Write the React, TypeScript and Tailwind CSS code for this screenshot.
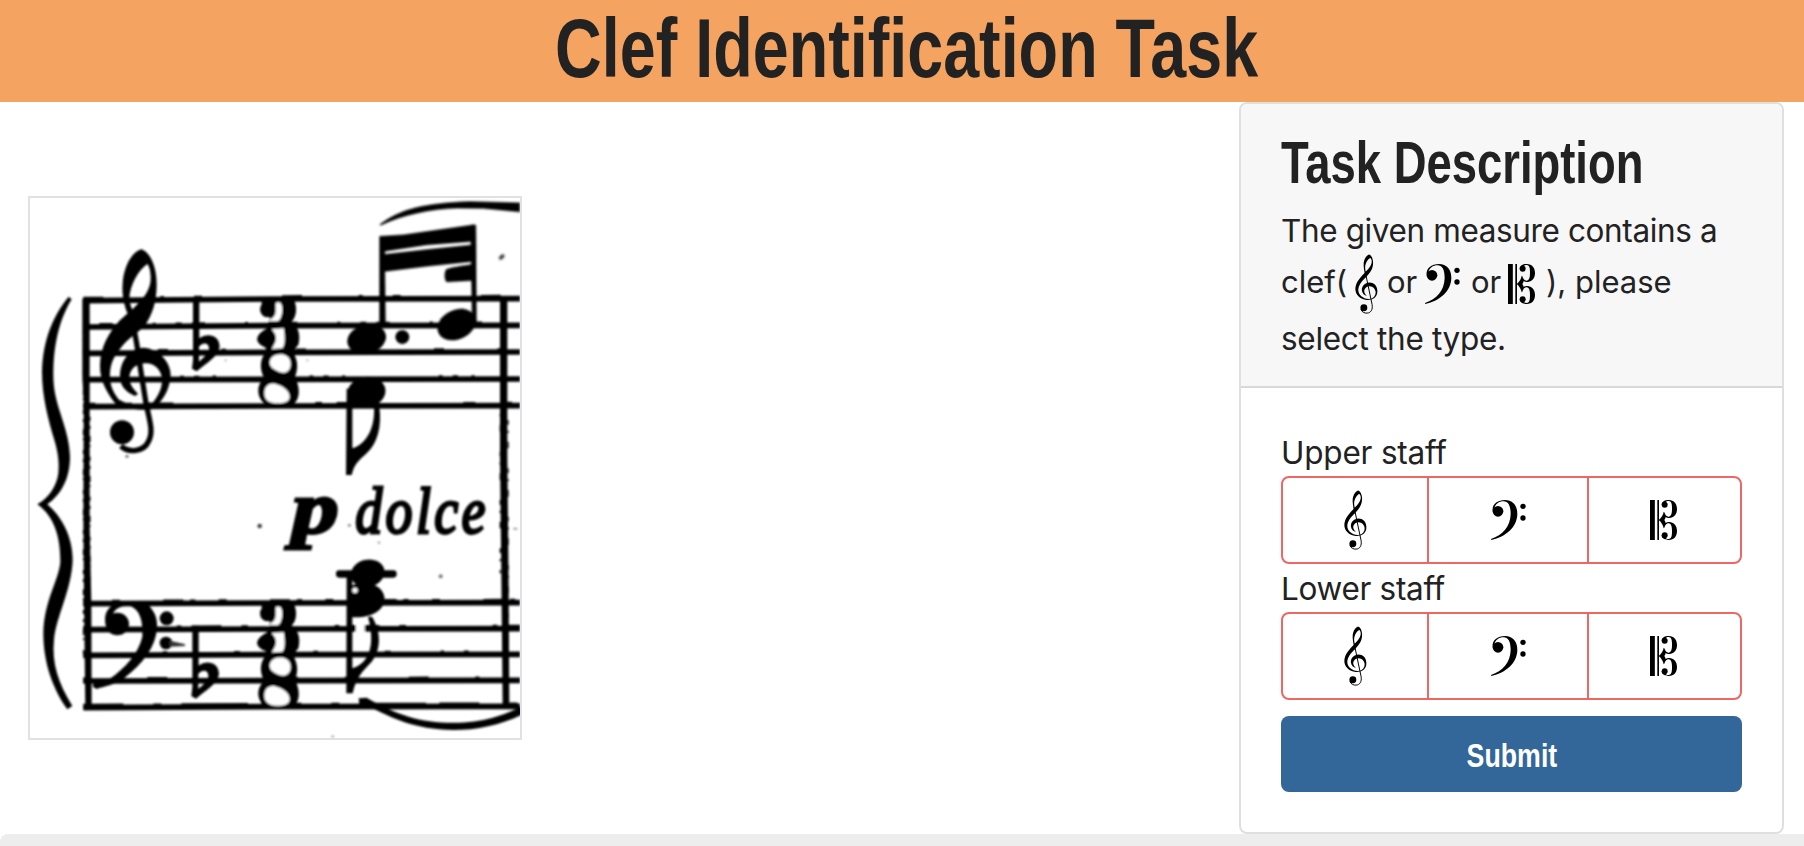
import React from "react";

type IconProps = { className?: string };

function TrebleClef({ className }: IconProps) {
  return (
    <svg viewBox="221 209 70 181" className={className} fill="#000">
      <path d="M264,210C271,212 277,224 276,238C275,255 266,267 255,278C242,290 232,302 231,317C231,334 246,344 262,345L268,344.5L268,347C264,348.500 260,348.500 257,348C236,346 222,332 222,314C223,294 236,281 248,268C259,257 271,246 272,232C272,224 269,220 267,220C259,224 251,238 252,252L254,266L251,269C247,250 246,236 249,228C252,219 258,211 264,210Z" />
      <path d="M268,347.500C282,344 290,334 289,319C288,304 278,295 265,295C251,296 241,306 242,319C243,328 250,334 257,336C251,330 249,325 249,320C250,311 257,306 266,306C276,307 283,314 284,324C284,335 278,342 268,345Z" />
      <path d="M252,262L273,362C276,378 268,388 258,388C250,389 242,385 239,377" fill="none" stroke="#000" strokeWidth="3" />
      <circle cx="248" cy="372" r="10.500" />
    </svg>
  );
}

function BassClef({ className }: IconProps) {
  return (
    <svg viewBox="660 240 105 120" className={className} fill="#000">
      <circle cx="681" cy="274" r="16" />
      <path d="M665,274C662,252 680,240 702,240C725,241 739,255 739,282C738,322 705,350 661,360L660,357C695,345 718,320 719,282C719,256 711,244 698,244C684,244 672,252 670,266Z" />
      <circle cx="756" cy="259" r="8" />
      <circle cx="756" cy="294" r="8" />
    </svg>
  );
}

function AltoClef({ className }: IconProps) {
  const lobe =
    "M1175,254C1176,244 1185,240 1196,240C1213,240 1221,252 1221,267C1221,283 1211,294 1198,294C1193,294 1190,293 1187,291C1186,296 1184,299 1182,301L1166,301C1174,293 1180,284 1181,275L1183,277C1186,286 1190,291 1197,290C1204,288 1206,280 1206,267C1206,250 1204,244 1196,243C1191,243 1187,245 1188,247Z";
  return (
    <svg viewBox="1140 240 81 120" className={className} fill="#000">
      <rect x="1140" y="240" width="14.500" height="120" />
      <rect x="1162" y="240" width="5" height="120" />
      <path d={lobe} />
      <circle cx="1184" cy="254" r="9" />
      <g transform="translate(0 600) scale(1 -1)">
        <path d={lobe} />
        <circle cx="1184" cy="254" r="9" />
      </g>
    </svg>
  );
}

function TimeSignature() {
  return (
    <g>
      <ellipse cx="67" cy="73" rx="22" ry="24" />
      <rect x="50" y="40" width="40" height="20" />
      <path d="M85,40L145,40C158,65 155,95 140,110C160,125 168,150 160,180C148,190 145,205 152,218C160,240 156,260 150,275C166,310 166,340 145,358L62,358C35,340 32,300 58,280C42,250 45,220 64,200L62,188C25,172 30,150 67,130Z" />
      <g fill="#fff">
        <path d="M92,54C108,46 113,60 111,82C109,98 104,108 96,109L70,109C66,103 92,104 92,78Z" />
        <path d="M80,133L116,130C121,160 120,180 112,190L80,192C86,182 93,172 93,160C93,150 88,142 80,133Z" />
        <path d="M74,232C76,214 92,206 112,208C132,212 140,228 136,246C130,262 118,266 106,262C90,256 74,248 74,232Z" />
        <path d="M58,325C58,304 72,292 90,296C114,302 134,318 134,336C132,350 120,355 96,355C74,356 58,345 58,325Z" />
      </g>
    </g>
  );
}

function StaffLine({ y1, y2, dash }: { y1: number; y2: number; dash: string }) {
  return (
    <g fill="none" stroke="#000">
      <path d={`M190,${y1}L750,${y2 + 1}L1500,${y2}`} strokeWidth="17" />
      <path d={`M190,${y1 - 3}L750,${y2 - 2}L1500,${y2 - 3}`} strokeWidth="17" strokeDasharray={dash} />
    </g>
  );
}

function Flat() {
  return (
    <path
      fillRule="evenodd"
      d="M519,325L538,325L538,445C560,428 598,433 599,470C595,500 560,518 530,544L516,536L519,510ZM537,470C550,454 568,458 567,478C562,495 550,503 537,515Z"
    />
  );
}

function Score() {
  return (
    <svg viewBox="30 24 1470 1620" className="block h-[540px] w-[490px]">
      <defs>
        <filter id="ink" x="-2%" y="-2%" width="104%" height="104%">
          <feGaussianBlur stdDeviation="3" />
        </filter>
      </defs>
      <g filter="url(#ink)" fill="#000">
        <StaffLine y1={332} y2={326} dash="60 170 12 90 24 240" />
        <StaffLine y1={411} y2={406} dash="18 30 40 120 9 60" />
        <StaffLine y1={490} y2={486} dash="14 210 30 160" />
        <StaffLine y1={569} y2={567} dash="10 280 12 30 16 40" />
        <StaffLine y1={650} y2={647} dash="36 90 20 44 80 300" />
        <StaffLine y1={1241} y2={1238} dash="16 70 24 130 60 20" />
        <StaffLine y1={1319} y2={1316} dash="20 260 14 30 90 60" />
        <StaffLine y1={1396} y2={1393} dash="18 150 10 60 14 200" />
        <StaffLine y1={1473} y2={1471} dash="12 180 60 140" />
        <StaffLine y1={1553} y2={1549} dash="120 90 24 60 200 40" />

        <path d="M187,326L209,326L209,1000L214,1240L215,1556L196,1556L192,1240L190,1000L191,640L187,560Z" />
        <path
          d="M191,420V1400M209,680V1200"
          fill="none"
          stroke="#000"
          strokeWidth="5"
          strokeDasharray="12 16 8 22 18 9 5 30"
        />
        <path d="M1440,326L1462,326L1462,800L1466,1200L1468,1550L1448,1550L1444,1150L1440,800Z" />
        <path
          d="M1441,640V1150M1464,690V1400"
          fill="none"
          stroke="#000"
          strokeWidth="4"
          strokeDasharray="14 18 7 26 20 60"
        />

        <path d="M146,320C100,375 68,450 66,545C66,620 85,690 103,750C115,790 118,820 115,850C110,890 85,925 52,943C90,970 122,1020 121,1115C117,1170 72,1230 70,1330C70,1420 100,1500 142,1558L157,1548C115,1480 95,1420 102,1350C108,1280 155,1200 158,1110C158,1040 125,980 82,943C120,915 150,870 150,800C148,720 110,660 102,590C95,500 110,400 155,328Z" />

        <path d="M365,178C395,190 412,240 410,290C408,340 398,370 374,408C350,430 325,445 305,470C280,500 268,525 270,565C272,600 290,625 315,648L290,645C260,610 240,570 240,530C240,490 252,450 285,408C305,382 325,370 345,350C365,330 395,300 392,260C391,240 388,230 382,222C355,240 330,285 328,325C330,345 335,355 340,365L325,375C312,350 305,310 308,280C312,230 335,185 365,178Z" />
        <path d="M300,560C300,510 330,475 370,473C415,475 452,515 452,555C450,600 425,640 395,658C370,662 320,658 285,638L300,630C330,648 370,650 392,645C415,620 430,590 425,560C420,535 400,518 375,520C345,522 328,540 328,565C330,590 345,600 354,612L345,618C315,605 300,585 300,560Z" />
        <path
          d="M338,395L350,460L362,540L378,640C388,690 402,725 385,755C372,785 325,790 303,768"
          fill="none"
          stroke="#000"
          strokeWidth="16"
        />
        <circle cx="306" cy="727" r="36" />
        <circle cx="321" cy="799" r="5" fill="#777" />
        <circle cx="617" cy="511" r="4" fill="#ccc" />

        <Flat />
        <g transform="translate(-2 983) scale(1 0.998)">
          <Flat />
        </g>
        <g transform="translate(675 285)">
          <TimeSignature />
        </g>
        <g transform="translate(675 1199) scale(1 0.98)">
          <TimeSignature />
        </g>

        <g transform="translate(0 810)">
          <ellipse cx="292" cy="492" rx="35" ry="34" />
          <path d="M257,495C250,460 262,438 300,425L380,430C405,455 413,475 411,505C407,560 370,610 312,655C285,675 250,680 230,687L218,680L222,664L268,657C315,625 355,580 367,530C369,480 360,450 330,437C296,436 278,450 275,475Z" />
          <circle cx="440" cy="475" r="21" />
          <circle cx="438" cy="549" r="19" />
          <path d="M450,542L495,553L495,558L450,560Z" fill="#333" />
          <circle cx="719" cy="198" r="7" fill="#444" />
        </g>

        <g transform="translate(750 0)">
          <path d="M328,104C390,55 470,38 600,34L750,38L750,66L640,56L560,55C480,58 400,75 333,106Z" />
          <path d="M328,138L400,134L615,103L617,154L470,165L345,184L345,192L470,178L617,163L617,214L480,228L345,245L347,400L328,400Z" />
          <path d="M528,238C540,230 580,228 605,222L612,272L530,276C522,270 522,248 528,238Z" />
          <path d="M601,105L618,105L620,400L606,400Z" />
          <ellipse cx="290" cy="447" rx="59" ry="43" transform="rotate(-14 290 447)" />
          <ellipse cx="560" cy="404" rx="60" ry="44" transform="rotate(-25 560 404)" />
          <circle cx="397" cy="441" r="21" />
          <ellipse cx="695" cy="201" rx="10" ry="6" fill="#444" transform="rotate(-45 695 201)" />
          <circle cx="112" cy="511" r="4" fill="#ccc" />
          <ellipse cx="289" cy="607" rx="58" ry="46" transform="rotate(-12 289 607)" />
          <path d="M230,595L247,605L247,775C290,762 316,712 312,650L328,650C336,710 322,760 290,790C265,812 252,825 245,855L228,855Z" />
        </g>

        <g transform="translate(750 810)">
          <text
            x="66"
            y="219"
            fontFamily="Liberation Serif, serif"
            fontStyle="italic"
            fontWeight="700"
            fontSize="222"
            stroke="#000"
            strokeWidth="9"
            textLength="140"
            lengthAdjust="spacingAndGlyphs"
          >
            p
          </text>
          <text
            x="256"
            y="218"
            fontFamily="Liberation Serif, serif"
            fontStyle="italic"
            fontSize="198"
            stroke="#000"
            strokeWidth="9"
            letterSpacing="12"
            textLength="400"
            lengthAdjust="spacingAndGlyphs"
          >
            dolce
          </text>
          <rect x="198" y="331" width="182" height="22" rx="10" />
          <ellipse cx="293" cy="340" rx="51" ry="41" transform="rotate(-14 293 340)" />
          <path d="M240,380C270,365 305,368 325,382C350,400 350,435 325,452C300,472 265,474 232,470Z" />
          <rect x="258" y="490" width="26" height="30" fill="#fff" />
          <path d="M230,345L247,345L247,625C295,610 318,560 294,470L306,470C336,520 332,570 305,605C280,632 258,650 248,700L229,700Z" />
          <circle cx="255" cy="391" r="8" fill="#fff" />
          <path d="M266,715L290,713C380,765 450,788 550,788C640,788 700,765 755,740L755,764C690,795 620,810 550,810C430,808 370,775 300,742L268,732Z" />
          <circle cx="512" cy="349" r="6" fill="#777" />
          <circle cx="238" cy="196" r="5" fill="#999" />
          <circle cx="327" cy="248" r="4" fill="#aaa" />
          <ellipse cx="736" cy="206" rx="7" ry="3" fill="#999" />
          <circle cx="188" cy="830" r="4" fill="#aaa" />
        </g>
      </g>
    </svg>
  );
}

function ClefChoice() {
  return (
    <div className="flex h-[88px] w-[461px] overflow-hidden rounded-lg border-2 border-[#eb6864]">
      <button type="button" className="flex w-[144px] items-center justify-center">
        <TrebleClef className="h-[60px] w-[23px]" />
      </button>
      <button type="button" className="flex w-[160px] items-center justify-center border-l-2 border-[#eb6864]">
        <BassClef className="h-10 w-[35px]" />
      </button>
      <button type="button" className="flex flex-1 items-center justify-center border-l-2 border-[#eb6864] pr-0.5">
        <AltoClef className="h-10 w-[27px]" />
      </button>
    </div>
  );
}

export default function App() {
  return (
    <div className="flex h-[846px] flex-col overflow-hidden bg-white font-['Inter',sans-serif] text-[#222]">
      <header className="flex h-[102px] shrink-0 justify-center bg-[#f4a460] pl-[9px]">
        <h1 className="h-[96px] origin-top scale-x-[0.77] whitespace-nowrap font-['Liberation_Sans',sans-serif] text-[84px] leading-[96px] font-bold">
          Clef Identification Task
        </h1>
      </header>

      <main className="flex h-[732px] shrink-0 items-start justify-between pr-5 pl-7">
        <div className="mt-[94px] border-2 border-[#dee2e6] bg-white">
          <Score />
        </div>

        <aside className="flex h-[732px] w-[545px] flex-col overflow-hidden rounded-lg border-2 border-[#dfdfdf]">
          <div className="h-[284px] border-b-2 border-[#d8d8d8] bg-[#f7f7f7] pt-[26px] pl-10">
            <h2 className="h-[66px] w-max origin-left scale-x-[0.776] whitespace-nowrap font-['Liberation_Sans',sans-serif] text-[58.5px] leading-[66px] font-bold">
              Task Description
            </h2>
            <p className="mt-[11px] h-12 text-[31.500px] leading-[48px] tracking-[-0.38px] whitespace-nowrap">
              The given measure contains a
            </p>
            <div className="-mt-px flex h-[60px] items-center text-[31px] leading-[44px] whitespace-nowrap">
              <span className="w-[74px] pb-1">clef(</span>
              <TrebleClef className="h-[60px] w-[23px]" />
              <span className="ml-[9px] w-[38px] pb-1">or</span>
              <BassClef className="h-10 w-[35px]" />
              <span className="ml-[11px] w-[37px] pb-1">or</span>
              <AltoClef className="h-10 w-[27px]" />
              <span className="ml-[11px] pb-1">), please</span>
            </div>
            <p className="mt-px h-12 text-[31.500px] leading-[48px] tracking-[-0.3px] whitespace-nowrap">select the type.</p>
          </div>

          <div className="flex flex-col pt-[40px] pl-10">
            <div className="h-12 pt-px text-[31.500px] leading-[48px] tracking-[-0.2px]">Upper staff</div>
            <ClefChoice />
            <div className="h-12 pt-px text-[31.500px] leading-[48px] tracking-[-0.3px]">Lower staff</div>
            <ClefChoice />
            <button
              type="button"
              className="mt-4 flex h-[76px] w-[461px] items-center justify-center rounded-lg bg-[#336699] pt-1 text-white"
            >
              <span className="scale-x-[0.81] font-['Liberation_Sans',sans-serif] text-[33px] font-bold">Submit</span>
            </button>
          </div>
        </aside>
      </main>

      <footer className="h-3 shrink-0 rounded-tl-lg bg-[#ededed]" />
    </div>
  );
}
